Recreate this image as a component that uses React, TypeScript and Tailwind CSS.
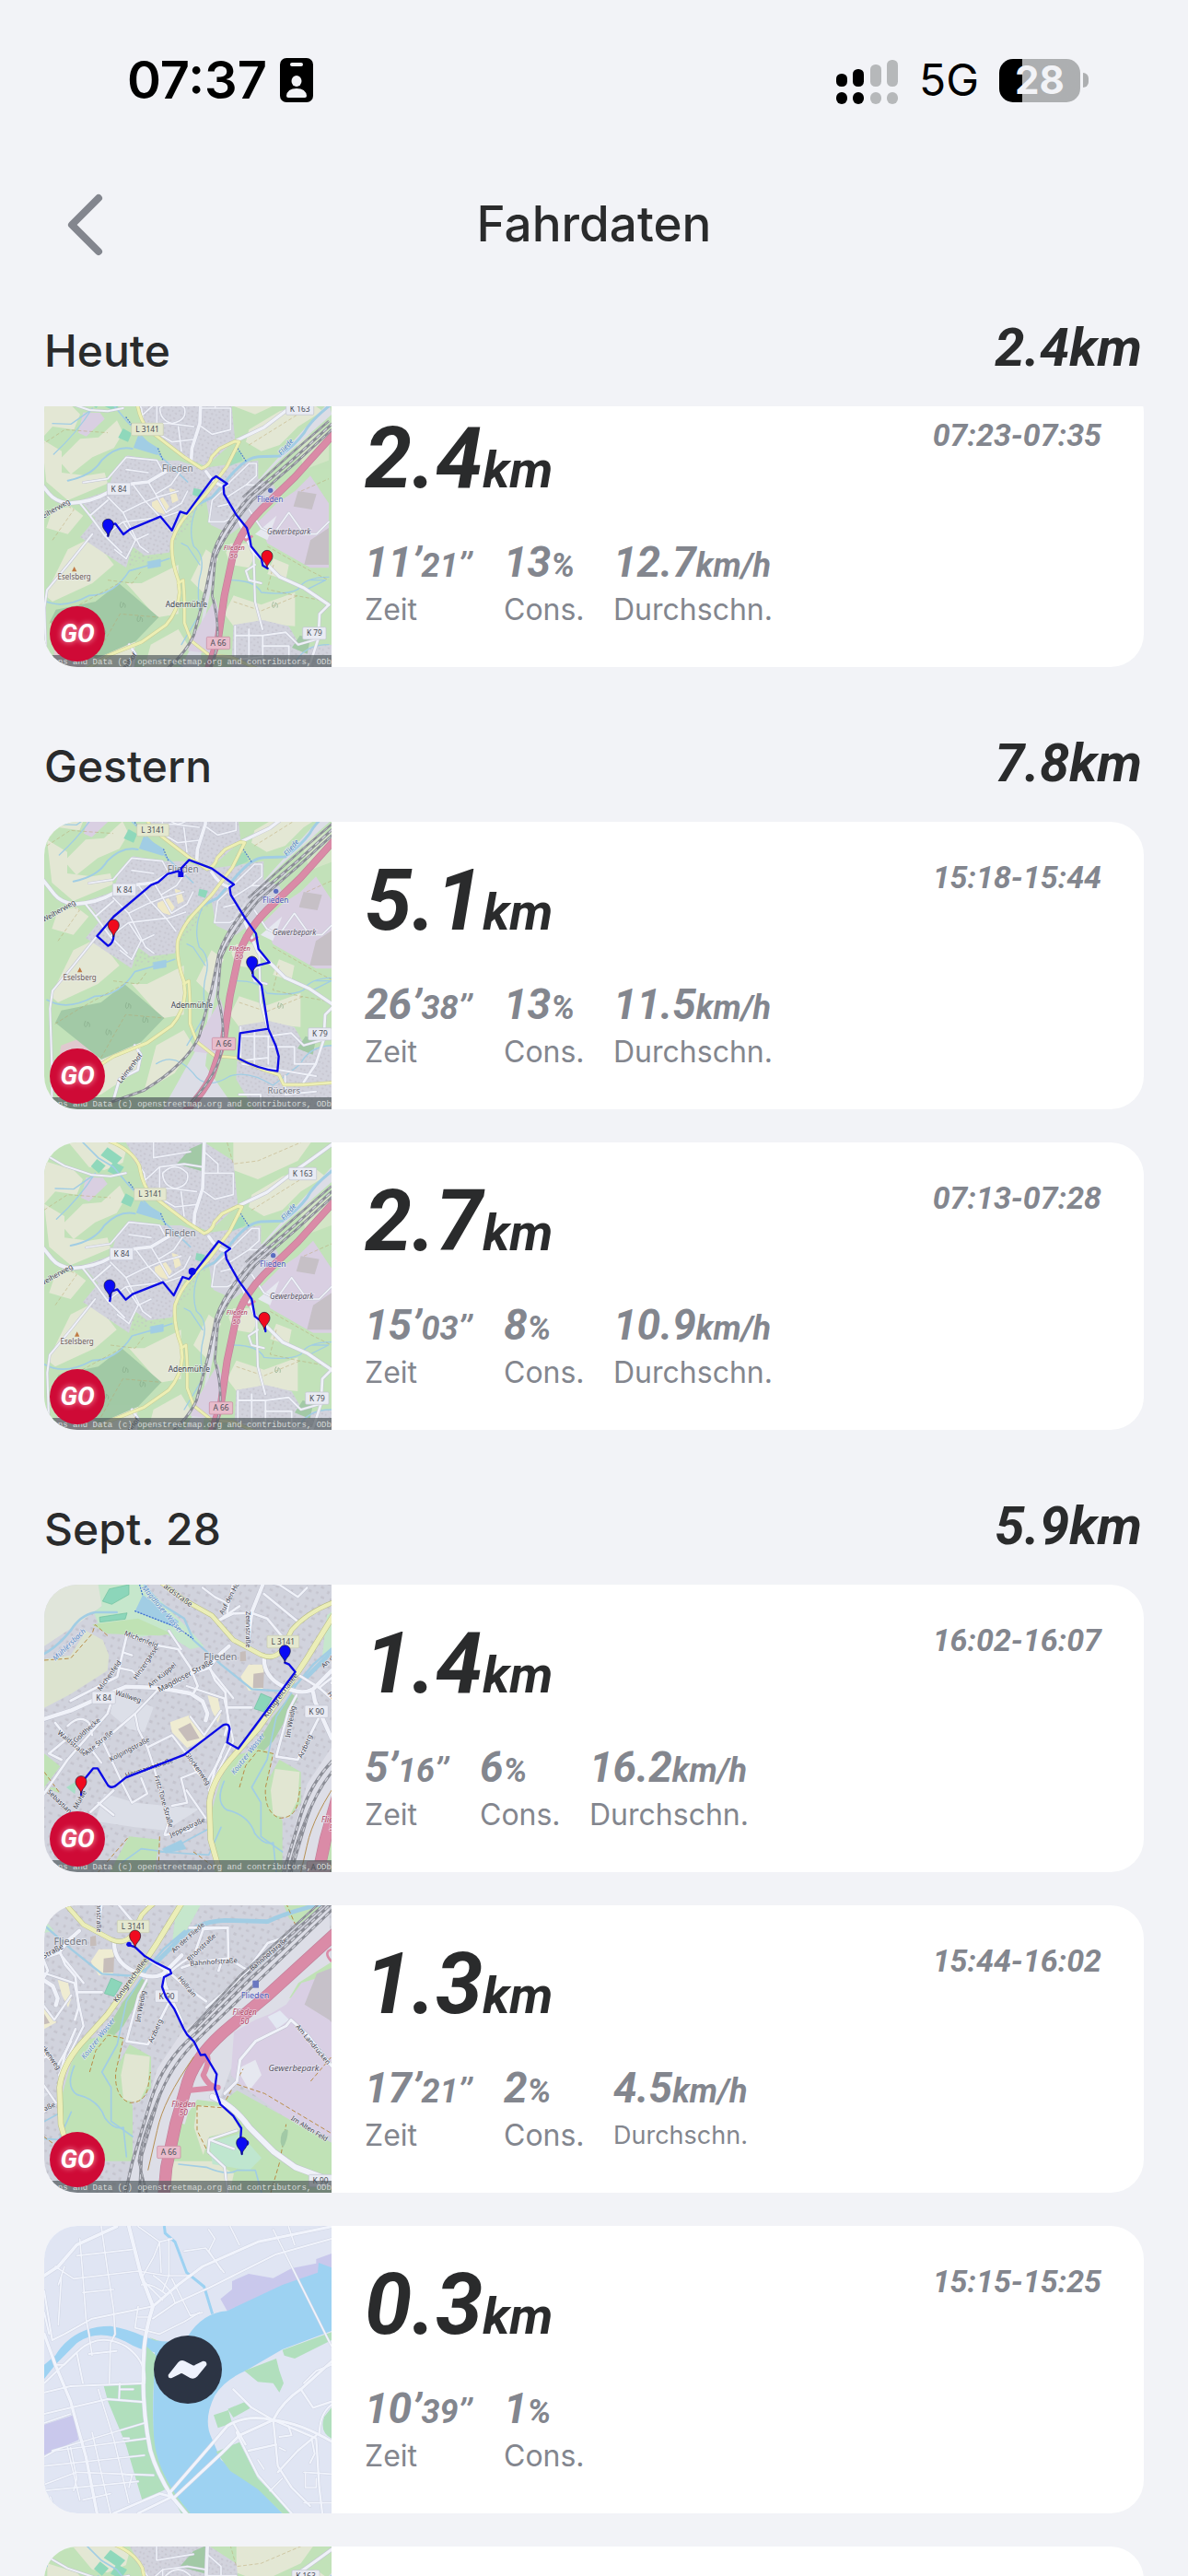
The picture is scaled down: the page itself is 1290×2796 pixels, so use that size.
import type { ReactNode } from "react";

/* ---------- map building blocks ---------- */

type RoadSet = { d: string; w: number };

function Roads({ items, color, casing }: { items: RoadSet[]; color: string; casing: string }) {
  return (
    <g fill="none" strokeLinecap="round" strokeLinejoin="round">
      {items.map((r, i) => (
        <path key={"c" + i} d={r.d} stroke={casing} strokeWidth={r.w + 3} />
      ))}
      {items.map((r, i) => (
        <path key={"f" + i} d={r.d} stroke={color} strokeWidth={r.w} />
      ))}
    </g>
  );
}

function Rail({ d, w = 9 }: { d: string; w?: number }) {
  return (
    <g fill="none">
      <path d={d} stroke="#8b8d96" strokeWidth={w} />
      <path d={d} stroke="#cfd0d8" strokeWidth={w - 5} strokeDasharray="16 14" />
    </g>
  );
}

function Tag({ x, y, w, text, kind = "k" }: { x: number; y: number; w: number; text: string; kind?: "k" | "l" | "a" }) {
  const fill = kind === "l" ? "#e4e8cf" : kind === "a" ? "#e8bccb" : "#e9ebf3";
  const stroke = kind === "l" ? "#c9cdb0" : kind === "a" ? "#c9879f" : "#c3c6d2";
  return (
    <g>
      <rect x={x - w / 2} y={y - 20} width={w} height={40} rx={4} fill={fill} stroke={stroke} strokeWidth={2} />
      <text x={x} y={y + 9} textAnchor="middle" fontSize={25} fill="#4c4f58" fontFamily="'Noto Sans', sans-serif">
        {text}
      </text>
    </g>
  );
}

function Label({
  x,
  y,
  text,
  size = 24,
  color = "#3f424b",
  rotate = 0,
  italic = false,
}: {
  x: number;
  y: number;
  text: string;
  size?: number;
  color?: string;
  rotate?: number;
  italic?: boolean;
}) {
  return (
    <text
      x={x}
      y={y + size * 0.35}
      transform={`rotate(${rotate} ${x} ${y})`}
      textAnchor="middle"
      fontSize={size}
      fill={color}
      stroke="#eef0f6"
      strokeWidth={4}
      strokeOpacity={0.7}
      paintOrder="stroke"
      fontStyle={italic ? "italic" : "normal"}
      fontFamily="'Noto Sans', sans-serif"
    >
      {text}
    </text>
  );
}

function Pin({ x, y, color }: { x: number; y: number; color: string }) {
  return (
    <path
      transform={`translate(${x} ${y})`}
      d="M0 0C-2-16-18-22-18-39a18 18 0 1 1 36 0C18-22 2-16 0 0Z"
      fill={color}
      stroke="#1a1a2e"
      strokeWidth={2}
      strokeLinejoin="round"
    />
  );
}

function Route({ d }: { d: string }) {
  return <path d={d} fill="none" stroke="#0a0ae6" strokeWidth={7} strokeLinejoin="round" strokeLinecap="round" />;
}

function Buildings({ id, size }: { id: string; size: number }) {
  return (
    <pattern id={id} width={size * 5} height={size * 5} patternUnits="userSpaceOnUse" patternTransform="rotate(24)">
      <g fill="#bfbdc7" opacity={0.7}>
        <rect x={size * 0.3} y={size * 0.4} width={size * 0.7} height={size * 0.5} />
        <rect x={size * 1.7} y={size * 0.2} width={size * 0.5} height={size * 0.7} />
        <rect x={size * 3.3} y={size * 0.7} width={size * 0.8} height={size * 0.5} />
        <rect x={size * 0.8} y={size * 2.1} width={size * 0.5} height={size * 0.6} />
        <rect x={size * 2.4} y={size * 1.9} width={size * 0.7} height={size * 0.5} />
        <rect x={size * 4.1} y={size * 2.3} width={size * 0.5} height={size * 0.7} />
        <rect x={size * 0.2} y={size * 3.6} width={size * 0.7} height={size * 0.6} />
        <rect x={size * 1.9} y={size * 3.4} width={size * 0.5} height={size * 0.5} />
        <rect x={size * 3.2} y={size * 3.9} width={size * 0.8} height={size * 0.5} />
      </g>
    </pattern>
  );
}

/* ---------- village overview ---------- */

const overviewStreets: RoadSet[] = [
  { d: "M10 360L48 408Q70 435 112 440Q190 436 240 405L320 376L372 370L430 336", w: 11 },
  { d: "M546 20L540 180L514 262L512 300", w: 11 },
  { d: "M970 30Q880 96 850 116L750 192L662 234", w: 10 },
  { d: "M10 60L90 106L180 136L240 140L290 130", w: 6 },
  { d: "M560 336Q585 376 616 384L630 380", w: 10 },
  { d: "M660 480L712 596L760 640L800 680L880 716L960 770", w: 10 },
  { d: "M190 540L110 640L42 722L34 780L40 966L40 1110", w: 6 },
  { d: "M150 440L182 480L230 545L285 600M182 480L240 430", w: 6 },
  { d: "M240 420L290 470L345 580L372 600M290 470L350 440L400 420L470 400", w: 5 },
  { d: "M230 545L290 500L412 486M290 500L330 560L372 540M330 560L300 620", w: 5 },
  { d: "M160 372L240 360L300 290L400 300L416 330M300 330L372 340M320 376L360 430L412 486L444 528", w: 5 },
  { d: "M372 370L396 410L446 380L480 330M396 410L430 470L480 440L500 400", w: 5 },
  { d: "M416 486L476 466M300 620L262 590", w: 5 },
  { d: "M300 60L350 130L356 180L440 180L520 190M356 150L400 110L480 100L540 110", w: 5 },
  { d: "M380 30L380 80L440 70L500 60M400 110L400 210L450 240L520 232M470 190L480 270", w: 5 },
  { d: "M410 130Q450 90 490 130Q500 170 450 180Q410 170 410 130", w: 5 },
  { d: "M545 130L640 130L640 200L580 215L545 190M545 60L590 100L590 130", w: 5 },
  { d: "M628 380L700 310L724 310L724 350L690 380L628 420M690 380L740 380L800 340", w: 5 },
  { d: "M612 400L580 430L570 500L620 500L660 480M640 440L600 450", w: 5 },
  { d: "M700 460L740 520L780 540L830 470L880 540L920 540L960 500", w: 5 },
  { d: "M720 640L690 660L700 690L740 700M715 600L720 760L744 850", w: 6 },
  { d: "M655 840L655 950L745 940M655 870L745 870L745 960M700 850L700 960M745 870L820 860L860 900L930 880", w: 6 },
  { d: "M745 905L830 905L830 960L900 960M660 960L780 980L900 1000M800 1000L800 1060L900 1050M650 1060L720 1060L720 1110", w: 6 },
  { d: "M960 770L930 800L926 880L900 960L860 1020", w: 8 },
  { d: "M310 900L330 930L320 980L260 1010L240 1080", w: 8 },
];

const overviewYellow: RoadSet[] = [
  { d: "M236 26Q310 54 334 106Q344 170 372 200L440 252L490 290L545 326Q572 318 578 290L604 262L654 238L668 240L628 320L560 410L500 474Q466 512 450 560Q444 620 470 690L474 730Q470 790 430 836L350 892L240 936L140 1000", w: 9 },
  { d: "M470 700L486 690L490 760L490 830L512 888L570 934L640 940L730 980L780 996L795 1028L860 1028L970 1020", w: 8 },
];

function Overview() {
  return (
    <g>
      <defs>
        <Buildings id="buildings-small" size={9} />
      </defs>
      <rect x={0} y={-100} width={1000} height={1260} fill="#c2e2b9" />
      <g fill="#e3e7d4">
        <path d="M95 20H236L290 60L280 96L220 120L170 110Z" />
        <path d="M24 90L120 120L150 150L130 200L60 190L24 230Z" />
        <path d="M150 230L210 225L270 170L290 210L260 260L190 290L120 345L80 300Z" />
        <path d="M24 230L90 270L90 340L170 350L230 340L240 375L110 430L40 370Z" />
        <path d="M640 20L900 20L850 90L720 150L640 120Z" />
        <path d="M700 200L800 140L900 110L940 140L860 190L800 250L740 270L690 240Z" />
        <path d="M110 590L190 550L260 640L190 700L60 760L36 740Z" />
        <path d="M60 460L120 450L160 480L110 540L40 520Z" />
        <path d="M350 700L470 640L470 800L400 812L300 700Z" />
        <path d="M60 950L200 930L330 890L320 980L200 1060L60 1080Z" />
        <path d="M560 740L510 690L560 590L600 620L560 700Z" />
        <path d="M640 570L700 570L720 610L700 650L640 640L625 600Z" />
        <path d="M780 620L830 640L820 690L760 670Z" />
        <path d="M650 740L740 770L850 730L850 840L740 830L650 840L620 800Z" />
        <path d="M850 230L960 200V300L880 330Z" opacity={0.5} />
        <path d="M380 900L470 850L500 900L440 990L340 1050Z" />
      </g>
      <g fill="#d2d3dd">
        <path d="M290 30H546L640 90L655 235L560 320L490 290L360 190L334 106Z" />
        <path d="M304 284L400 300L470 300L545 326L730 300V360L780 380L800 420L640 540L575 510L560 430L480 480L440 600L360 610L320 580L300 650L150 550L200 490L150 430L240 400L260 330Z" />
        <path d="M970 150L800 300L680 420L640 520L600 600L560 800L540 966L640 1110H400L540 860L580 600L640 470L760 330L960 110Z" fill="#dcdde6" />
        <path d="M650 836L745 820L830 840L870 910L970 900V1110H700L640 1010Z" />
      </g>
      <g fill="url(#buildings-small)">
        <path d="M290 30H546L640 90L655 235L560 320L490 290L360 190L334 106Z" />
        <path d="M304 284L400 300L545 326L730 300V360L640 520L560 430L440 600L300 650L150 550L200 490L150 430L240 400Z" />
        <path d="M650 836L745 820L830 840L870 910L970 900V1110H700L640 1010Z" />
      </g>
      <g fill="#d9cfe2">
        <path d="M160 144L215 145L230 165L170 222L144 210Z" />
        <path d="M730 500L790 440L850 400L900 350L960 440V650L900 650L760 570Z" />
        <path d="M590 750L604 800L580 930L500 920L520 870Z" />
        <path d="M70 900L150 870L190 940L130 1010L60 960Z" fill="#e0c9cf" />
      </g>
      <path d="M860 400L920 410L905 460L845 450ZM900 560L960 520V640L880 640Z" fill="#c6c0c6" />
      <path d="M720 540L790 480L760 560Z" fill="#e6e8f0" />
      <g fill="#a2c9a6">
        <path d="M276 700L406 811L330 890L201 946L51 826L71 786L200 760Z" />
        <path d="M500 50L546 30V126L456 100Z" />
        <path d="M866 870L900 880L890 930L840 910Z" />
      </g>
      <g fill="#8fd8bb">
        <path d="M230 46L278 80L256 104L208 72Z" />
        <path d="M196 84L224 106L202 130L176 108Z" />
        <path d="M250 92L284 110L264 140L230 124Z" />
        <path d="M290 196L318 212L306 240L274 226Z" />
        <path d="M520 390L548 396L540 420L516 412Z" />
        <path d="M640 280L670 270L680 300L636 320Z" opacity={0.6} />
      </g>
      <path d="M384 436L420 420L440 450L424 476L384 462ZM440 390L460 396L470 430L450 440Z" fill="#efe9c8" />
      <g fill="none" stroke="#a1cde4" strokeLinecap="round" strokeLinejoin="round">
        <path d="M340 222L404 262L400 280L326 258Z" fill="#a1cde4" strokeWidth={4} />
        <path d="M970 116Q900 170 880 210Q850 250 800 286L730 288Q690 290 640 350L580 420L520 450" strokeWidth={9} />
        <path d="M320 262Q270 250 220 300Q190 350 110 366" strokeWidth={6} />
        <path d="M20 36L24 100M60 180L120 182L180 140M190 130Q140 210 64 280" strokeWidth={4} />
        <path d="M150 30L200 80L250 110L300 170L416 290L500 370" strokeWidth={5} />
        <path d="M24 752Q90 790 180 740Q260 740 310 660L380 640L440 620" strokeWidth={5} />
        <path d="M530 450Q500 520 520 580Q560 610 540 680Q530 720 540 800L480 900" strokeWidth={4} />
        <path d="M480 570L500 580L540 640" strokeWidth={4} />
        <path d="M640 690Q720 690 740 730Q820 740 860 720Q880 680 960 680M895 690L950 690L890 720" strokeWidth={4} />
        <path d="M380 960Q440 920 500 990Q540 1050 620 1000Q680 980 760 1030Q800 1000 850 960Q880 900 960 900" strokeWidth={4} />
        <path d="M370 630L412 622L412 645L372 652Z" fill="#a1cde4" strokeWidth={2} />
        <path d="M300 160L330 200M404 262L420 300M664 262L690 302" stroke="#4f7fd0" strokeWidth={4} strokeDasharray="2 7" />
      </g>
      <g fill="none" stroke="#b9a36c" strokeWidth={2} strokeDasharray="12 7" opacity={0.7}>
        <path d="M24 250L100 200L240 210M60 560L130 460L60 420M240 690L320 700L350 660M620 30L640 100L720 90L860 30" />
        <path d="M700 250L860 150M870 400L960 360M760 580L900 660L960 690M780 640L760 720L850 740L960 760" />
        <path d="M50 830L130 780L276 700M200 940L280 800L406 811M650 760L740 790L860 740" />
      </g>
      <Roads items={overviewStreets} color="#eff1f8" casing="#c3c5d2" />
      <Roads items={overviewYellow} color="#edefb4" casing="#c8cb93" />
      <path
        d="M980 210L850 354L740 460Q680 520 650 600L620 740L600 880L560 1000Q530 1060 470 1120"
        fill="none"
        stroke="#c2809a"
        strokeWidth={24}
      />
      <path
        d="M980 210L850 354L740 460Q680 520 650 600L620 740L600 880L560 1000Q530 1060 470 1120"
        fill="none"
        stroke="#da8ba7"
        strokeWidth={20}
      />
      <path d="M664 540L690 560L712 546" fill="none" stroke="#da8ba7" strokeWidth={8} />
      <Rail d="M976 176L840 300L700 420Q610 520 584 600L560 720L520 870Q480 960 341 1046L230 1086" />
      <Rail d="M970 200L850 310L712 430Q620 540 590 620L580 740Q610 850 590 930Q570 1010 480 1100" w={8} />
      <Rail d="M960 172L840 276L680 420" w={7} />
      <Tag x={866} y={132} w={90} text="K 163" />
      <Tag x={369} y={199} w={104} text="L 3141" kind="l" />
      <Tag x={276} y={393} w={76} text="K 84" />
      <Tag x={913} y={863} w={76} text="K 79" />
      <Tag x={600} y={895} w={76} text="A 66" kind="a" />
      <Label x={467} y={326} text="Flieden" size={30} color="#74777f" />
      <Label x={769} y={427} text="Flieden" size={25} color="#4a56b8" />
      <circle cx={770} cy={398} r={8} fill="#5a6cc0" />
      <Label x={820} y={256} text="Fliede" size={24} color="#4f83c4" rotate={-50} italic />
      <Label x={830} y={532} text="Gewerbepark" size={24} color="#5b5566" italic />
      <Label x={652} y={584} text="Flieden" size={22} color="#b03a5b" italic />
      <Label x={650} y={612} text="50" size={22} color="#b03a5b" italic />
      <Label x={131} y={680} text="Eselsberg" size={24} color="#6c5a52" />
      <path d="M131 646L139 662H123Z" fill="#c07a45" />
      <Label x={496} y={769} text="Adenmühle" size={25} />
      <Label x={62} y={462} text="Weiherweg" size={23} rotate={-30} />
      <Label x={796} y={1046} text="Rückers" size={29} color="#74777f" />
      <Label x={294} y={974} text="Leimenhof" size={23} rotate={-52} />
      <g fill="none" stroke="#87ab8a" strokeWidth={2}>
        <path d="M284 760q-8 14 0 20q8-4 6-16q10 4 6 16M340 806q-8 14 0 20q8-4 6-16q10 4 6 16M150 820q-8 14 0 20q8-4 6-16q10 4 6 16M220 846q-8 14 0 20q8-4 6-16q10 4 6 16M780 760q-8 14 0 20q8-4 6-16q10 4 6 16" />
      </g>
    </g>
  );
}

/* ---------- village close-up ---------- */

const closeStreets: RoadSet[] = [
  { d: "M10 472L110 440L200 400L290 362L400 366L500 384L540 410L556 450L550 472", w: 13 },
  { d: "M740 20L700 120L690 200M626 230L590 262L560 300L500 320L420 372", w: 12 },
  { d: "M700 122L640 124L586 150M700 122L750 140L800 200M740 60L850 150M586 150L660 100", w: 8 },
  { d: "M740 270Q740 330 800 360Q860 392 900 370L960 310M900 380L906 410L960 530", w: 13 },
  { d: "M562 296L580 340L614 380L624 480L612 520M624 430L700 430M614 550L580 630L562 710", w: 8 },
  { d: "M294 190L280 250L262 330L110 408M294 190L360 222L460 240L500 300L524 360L510 384", w: 8 },
  { d: "M380 240L330 330M280 250L310 260M262 300L310 310L330 330M430 180L470 240", w: 7 },
  { d: "M240 420L230 450L100 600L10 730M60 480L100 530L160 580M100 530L40 580L80 600", w: 8 },
  { d: "M400 366L320 450L180 570L210 610M320 450L330 500L360 560L380 620L430 800L416 845", w: 7 },
  { d: "M100 490Q140 450 170 480L180 520M210 530L280 680L310 740L360 710L340 660M360 560L440 520L490 585", w: 7 },
  { d: "M490 585L520 640L470 660L490 740L440 750M520 640L555 670L600 590M500 460L545 520L600 440", w: 7 },
  { d: "M530 800L500 830L420 845M175 770L250 700M200 740L250 780", w: 8 },
  { d: "M740 20L790 30L850 70L880 40M540 40L580 70L620 90M640 20L620 120", w: 7 },
  { d: "M846 320L920 366L970 410L1040 460M846 390L820 440L780 590L850 600L900 500L920 460", w: 8 },
  { d: "M920 366Q960 330 1000 310L1030 225L1110 220L1112 320L1020 330L960 350M1112 320L1160 350L1180 360L1040 480", w: 8 },
  { d: "M1180 350L1240 270L1300 250M1090 330L1080 360M985 220L1110 220", w: 8 },
  { d: "M1100 760L1140 720L1150 650L1200 590L1300 540L1316 520L1370 570L1448 670", w: 9 },
  { d: "M1060 770Q1130 800 1180 870L1260 950L1330 1000L1448 1044", w: 18 },
  { d: "M1140 880L1050 910L1046 950L1100 1000L1110 1090M1050 910L1130 940", w: 7 },
  { d: "M488 360L610 400L640 540L560 700M488 700L550 790M560 300L640 400", w: 7 },
];

const closeYellow: RoadSet[] = [
  { d: "M404 22L480 80L570 130L640 210L730 258Q770 276 796 246L830 178Q880 120 970 86", w: 13 },
  { d: "M970 124Q910 220 880 270L820 360L720 500L630 600Q570 670 562 740L566 860L600 980", w: 16 },
];

function CloseUp() {
  return (
    <g>
      <defs>
        <Buildings id="buildings-large" size={15} />
      </defs>
      <rect x={0} y={0} width={1480} height={1110} fill="#d1d3dd" />
      <rect x={0} y={0} width={1480} height={1110} fill="url(#buildings-large)" />
      <g fill="#e0e5da">
        <path d="M0 0H200L212 100L130 160L24 230L0 230Z" />
        <path d="M0 276L110 260L160 180L215 210L235 260L230 310L110 386L0 444Z" fill="#dce3cf" />
      </g>
      <g fill="#c6e7cc">
        <path d="M200 30H350L500 180L545 230L500 240L420 190L330 200L210 180L185 120L212 100Z" />
        <path d="M945 130L1010 80L1030 130L970 240L930 260Z" />
      </g>
      <path d="M180 160L330 140L440 190L400 196L230 190Z" fill="#bfe2b4" />
      <path d="M250 370L380 430L350 510L300 500L240 450ZM220 710L320 740L420 750L530 760L420 830L320 820L190 800Z" fill="#dcdfe8" />
      <g fill="#8cd6ba" stroke="#6cc09f" strokeWidth={2}>
        <path d="M236 44L300 30V62L244 94L214 84Z" />
        <path d="M204 136L294 122L288 142L206 152Z" />
        <path d="M730 384L766 400L740 444L708 434Z" />
      </g>
      <path d="M434 478L500 454L552 528L490 562L440 510ZM556 390L590 400L600 450L590 480L570 440ZM690 290L740 290L736 370L690 376L664 330Z" fill="#efecd2" />
      <path d="M460 500L500 480L530 530L490 540ZM706 320L740 316L738 366L704 366ZM662 250L680 246L682 278L662 280Z" fill="#c6bdba" />
      <g fill="#c0e2b6">
        <path d="M640 590L730 560L770 580L750 690L800 800L800 980H580L566 780L600 660Z" />
        <path d="M24 580L76 622L24 690ZM24 690L76 710L60 690ZM230 980L300 850L400 860L380 980Z" />
        <path d="M790 600L860 640L860 740L820 790L770 780L740 690Z" />
      </g>
      <path d="M830 385L850 400L770 540L740 570L710 560L770 460Z" fill="#a9d3a8" />
      <path d="M776 630L856 640L850 730L820 790L770 780L762 700Z" fill="#e1e6d2" />
      <path d="M96 690L130 670L124 712Z" fill="#a8dfc6" />
      {/* right half: railway, works area, meadows */}
      <path d="M1020 150L1040 130L1290 140L1310 190L1340 210L1448 130V30H1180L1060 100Z" fill="#c2e2b8" />
      <path d="M1440 150L1130 430L960 560L880 680L830 860L760 1110H1000L1040 900L1120 680L1448 420Z" fill="#dddee7" />
      <path d="M1310 450L1340 400L1450 330V420L1350 440Z" fill="#c0e2b6" />
      <path d="M1130 560L1200 520L1250 500L1300 470L1350 400L1448 370V900L1340 870L1150 730L1120 700Z" fill="#d9cfe4" />
      <path d="M1140 680L1200 650L1220 700L1180 750Z" fill="#e6e8f0" />
      <path d="M1360 470L1400 370L1450 350V530L1440 520Z" fill="#c6c1c9" />
      <path d="M1240 510L1280 490L1310 520L1270 550Z" fill="#e3e8f2" />
      <path d="M1140 750L1448 920V1110H910L930 900L1010 780L1090 790Z" fill="#c0e2b6" />
      <path d="M1010 800L1110 800L1150 880L1050 900L1030 960L1000 870Z" fill="#e1e6d2" />
      <path d="M920 980L1060 980L1130 1020L1110 1110H920Z" fill="#e1e6d2" />
      <path d="M1050 920L1150 890L1220 970L1180 1010L1060 990Z" fill="#bfe6cf" />
      <path d="M930 800L990 790L970 860L930 850Z" fill="#dedfe8" />
      <g fill="none" stroke="#a1cde4" strokeLinecap="round" strokeLinejoin="round">
        <path d="M322 116L346 66L460 150L452 168Z" fill="#a1cde4" strokeWidth={4} />
        <path d="M10 262Q60 240 110 180Q140 130 190 120L260 120" strokeWidth={8} />
        <path d="M350 30L400 90L480 140L510 210L600 290L700 370L810 378L850 350L900 290L970 230" strokeWidth={7} />
        <path d="M1448 134Q1300 170 1240 200L1100 196Q1000 200 940 270L880 330" strokeWidth={14} />
        <path d="M850 350L780 460L750 600L700 690L730 740L730 850L800 900" strokeWidth={5} />
        <path d="M610 670Q580 740 620 764Q690 780 710 840Q740 880 770 870L780 966" strokeWidth={5} />
        <path d="M570 820L420 900L340 890L270 940M400 900L560 910L600 820" strokeWidth={5} />
        <path d="M410 890L470 862L486 890L420 904Z" fill="#a1cde4" strokeWidth={2} />
        <path d="M950 990L1040 1000Q1110 1030 1140 1010L1200 1010L1220 1083" strokeWidth={5} />
        <path d="M335 30L345 66M320 116L460 170L508 206M1000 80L1024 140" stroke="#3f6fd0" strokeWidth={4} strokeDasharray="3 7" />
      </g>
      <g fill="none" stroke="#b98b45" strokeWidth={3} strokeDasharray="14 8">
        <path d="M24 276L110 270L180 190L190 160L235 200" />
        <path d="M660 690L680 620L720 570L770 580L745 690Q740 770 790 790Q840 790 850 740L858 690" />
        <path d="M200 966L300 850M400 850L396 966M510 900L600 966M24 640L76 710M1300 140L1330 210M1140 730L1230 760L1448 890" />
        <path d="M1010 800L1090 806L1160 680M1010 800L1010 880L1050 960M1250 1083L1280 980L1300 860M1380 720L1448 640" />
      </g>
      <Roads items={closeStreets} color="#f0f2f9" casing="#bfc1ce" />
      <Roads items={closeYellow} color="#ebeeb8" casing="#b9bd85" />
      <g fill="none" strokeLinejoin="round">
        <path d="M1470 230L1240 440L1120 540Q1010 630 980 720L940 860L910 1000L900 1110" stroke="#c2809a" strokeWidth={40} />
        <path d="M1470 230L1240 440L1120 540Q1010 630 980 720L940 860L910 1000L900 1110" stroke="#da8ba7" strokeWidth={36} />
        <path d="M1030 620Q1060 640 1030 700Q1050 740 1078 740L980 750" stroke="#da8ba7" strokeWidth={18} />
        <path d="M1448 330Q1420 300 1448 290" stroke="#da8ba7" strokeWidth={8} />
      </g>
      <Rail d="M1460 130L1180 390L1010 560Q900 650 860 780L800 980L770 1110" w={10} />
      <Rail d="M1460 152L1200 402L1020 576Q920 670 880 790L830 960L820 1110" w={9} />
      <Rail d="M1440 130L1160 384L1000 550" w={9} />
      <Rail d="M1420 130L1150 376L980 560" w={7} />
      <Rail d="M890 760Q830 900 820 980L850 1100" w={7} />
      <path d="M1000 640Q900 780 880 880L850 1010" fill="none" stroke="#b58f52" strokeWidth={3} />
      <Tag x={218} y={398} w={76} text="K 84" />
      <Tag x={802} y={216} w={104} text="L 3141" kind="l" />
      <Tag x={911} y={443} w={76} text="K 90" />
      <Tag x={918} y={951} w={76} text="A 66" kind="a" />
      <Tag x={1412} y={1044} w={76} text="K 90" />
      <Label x={598} y={264} text="Flieden" size={32} color="#74777f" />
      <Label x={460} y={64} text="ardstraße" size={24} rotate={36} />
      <Label x={410} y={110} text="Magdloser Wasser" size={24} color="#5a8cc6" rotate={50} italic />
      <Label x={105} y={225} text="Mühlersbach" size={24} color="#5a8cc6" rotate={-44} italic />
      <Label x={340} y={208} text="Michenfeld" size={22} rotate={22} />
      <Label x={236} y={326} text="Michenfeld" size={22} rotate={-54} />
      <Label x={354} y={284} text="Hinzergasse" size={22} rotate={-56} />
      <Label x={408} y={324} text="Am Küppel" size={22} rotate={-40} />
      <Label x={484} y={326} text="Magdloser Straße" size={24} rotate={-28} />
      <Label x={690} y={176} text="Zennstraße" size={22} rotate={90} />
      <Label x={630} y={68} text="Auf den Höh" size={22} rotate={-62} />
      <Label x={298} y={394} text="Wallweg" size={22} rotate={18} />
      <Label x={162} y={504} text="Goldhecke" size={22} rotate={-42} />
      <Label x={116} y={546} text="Waldstraße" size={22} rotate={40} />
      <Label x={202} y={544} text="Alte Straße" size={22} rotate={-40} />
      <Label x={302} y={566} text="Kolpingstraße" size={22} rotate={-28} />
      <Label x={524} y={628} text="Glockenweg" size={22} rotate={54} />
      <Label x={414} y={736} text="Fritz-Töne-Straße" size={22} rotate={74} />
      <Label x={490} y={820} text="Jeppestraße" size={22} rotate={-24} />
      <Label x={74} y={736} text="Sebastian" size={22} rotate={44} />
      <Label x={140} y={730} text="Mühle" size={22} rotate={-60} />
      <Label x={366} y={626} text="Hermannstraße" size={22} rotate={-18} />
      <Label x={688} y={580} text="Koutzer Wasser" size={24} color="#5a8cc6" rotate={-52} italic />
      <Label x={793} y={390} text="Königreichallee" size={24} rotate={-54} />
      <Label x={826} y={476} text="Im Weidig" size={22} rotate={-80} />
      <Label x={874} y={556} text="Arzberg" size={22} rotate={-66} />
      <Label x={980} y={252} text="An der Fliede" size={22} rotate={-42} />
      <Label x={1024} y={284} text="Rhönstraße" size={22} rotate={-44} />
      <Label x={1064} y={331} text="Bahnhofstraße" size={22} rotate={-4} />
      <Label x={1243} y={306} text="Bahnhofstraße" size={22} rotate={-40} />
      <Label x={978} y={412} text="Höllrain" size={22} rotate={50} />
      <Label x={1199} y={440} text="Flieden" size={27} color="#4a56b8" />
      <rect x={1191} y={392} width={20} height={24} fill="#6a78c0" />
      <Label x={1165} y={496} text="Flieden" size={25} color="#b03a5b" italic />
      <Label x={1165} y={525} text="50" size={25} color="#b03a5b" italic />
      <Label x={966} y={794} text="Flieden" size={25} color="#b03a5b" italic />
      <Label x={966} y={823} text="50" size={25} color="#b03a5b" italic />
      <Label x={1325} y={677} text="Gewerbepark" size={28} color="#5b5566" italic />
      <Label x={1388} y={600} text="Am Landrücken" size={22} rotate={50} />
      <Label x={1376} y={874} text="Im Alten Feld" size={22} rotate={32} />
      <path d="M1286 890Q1300 870 1306 880Q1306 910 1290 936Q1276 920 1286 890Z" fill="#a2c9a6" />
    </g>
  );
}

/* ---------- placeholder city map ---------- */

const cityStreets: RoadSet[] = [
  { d: "M24 210L70 180L130 110L260 50", w: 11 },
  { d: "M300 50L340 210L378 310Q350 400 348 470Q340 640 370 780Q390 850 440 930L490 990", w: 12 },
  { d: "M378 310L460 240L540 180L720 100L960 50", w: 9 },
  { d: "M378 350L450 300L560 250L640 210L780 140L960 90", w: 6 },
  { d: "M24 400L60 500L110 620L160 800L196 984", w: 10 },
  { d: "M24 260L50 420L90 400L180 350L378 310M24 330L40 400", w: 6 },
  { d: "M140 90L150 210L160 350L170 400L180 470M210 50L230 190L250 320L255 400L240 430L236 560", w: 5 },
  { d: "M60 180L120 220L330 195L420 210L500 210M130 145L310 125M150 265L250 255M80 210L70 370M90 180L70 240", w: 5 },
  { d: "M330 50L400 100L440 90M400 100L380 150L340 220L410 290M400 100L405 200M430 90L430 210L410 260", w: 5 },
  { d: "M480 130L550 120L610 200M560 60L580 90L560 130L600 190M630 50L660 110M820 50L840 110M770 60L960 440", w: 5 },
  { d: "M380 210Q440 250 450 300M440 220L480 300L500 340L540 330M340 240Q370 230 420 270", w: 5 },
  { d: "M320 380L330 310M320 380L400 400L480 360L530 330M330 345L370 345", w: 5 },
  { d: "M24 560L130 460Q200 390 290 440Q360 490 350 560", w: 6 },
  { d: "M60 500L90 500L130 460L150 560M170 465L260 455M24 590L110 570L350 560M24 660L230 612L350 622", w: 6 },
  { d: "M24 690L110 660M50 780L350 690M24 800L60 780L360 740M24 830L350 795M24 890L130 850L380 860M24 910L330 880", w: 5 },
  { d: "M100 770L140 940M180 720L240 984M110 770L130 870L120 910M200 580L250 740L300 950M44 930L60 984M150 940L240 920", w: 5 },
  { d: "M270 560L268 610M270 580L314 580M280 740L300 740M280 856L310 860L300 900", w: 5 },
  { d: "M430 920L560 770L620 700Q680 660 770 680Q860 690 960 750", w: 9 },
  { d: "M450 930L600 790L660 730L770 680M770 680Q800 620 860 580L960 490", w: 9 },
  { d: "M640 580L700 640L770 680L785 830L830 900L890 960M650 720L720 860L830 984M640 690L680 760", w: 7 },
  { d: "M770 680L910 740L920 900L930 984M785 850L850 780L910 730M690 780L780 760M860 580L900 640L960 620", w: 7 },
  { d: "M870 850L960 856M875 850V900H910V870M870 950L960 950M740 840L720 810M800 870L760 910M790 770L810 780", w: 5 },
  { d: "M920 730Q920 660 960 630M870 560L910 520L960 500M895 740L905 790L890 820M820 700L830 730L790 735", w: 6 },
  { d: "M250 984L400 920L440 930L330 984", w: 8 },
];

function CityMap() {
  return (
    <svg viewBox="24 48 936 936" className="size-full" role="img" aria-label="Stadtkarte">
      <rect x={0} y={30} width={980} height={980} fill="#e0e5f3" />
      <g fill="#c9c8ec">
        <path d="M24 695L120 664L136 745L24 794Z" />
        <path d="M598 286L636 255V228L690 204L770 218L830 186L910 170V156L960 138V220L620 325Z" />
      </g>
      <path d="M24 500L60 470Q120 374 240 374Q300 384 350 408Q430 440 490 410Q540 330 620 325L800 240L915 200L918 168L960 184V390L800 450L680 520Q610 550 580 600Q540 680 570 740L600 810L720 900L800 984H490Q400 900 380 760Q376 640 384 460Q330 450 290 425Q200 380 130 430L60 500L24 546Z" fill="#9dd2f2" />
      <path d="M415 48L418 72L450 100L488 200L545 246L572 335" fill="none" stroke="#9dd2f2" strokeWidth={9} />
      <g fill="#b1dfbd">
        <path d="M358 440L388 470Q370 640 384 760Q400 870 500 984H470L370 800Q340 640 358 440Z" />
        <path d="M216 562L352 560L350 620L358 720L370 800L430 900L344 944L290 760L232 620Z" />
        <path d="M576 664L624 648L636 690L590 706ZM622 644L680 620L698 640L640 672Z" />
        <path d="M676 520L780 480L790 520L804 560L790 590L770 560L720 556Z" />
        <path d="M800 452L960 394V420L840 480L806 470Z" />
        <path d="M584 784L660 752L720 870L830 984H800L720 905L630 846Z" />
        <path d="M960 640V740Q920 720 936 670ZM365 410L400 424L380 420Z" />
      </g>
      <Roads items={cityStreets} color="#f1f4fc" casing="#d0d5e4" />
      <circle cx={492} cy={516} r={111} fill="#2c3444" />
      <path
        d="M428 533L460 493Q469 482 482 488L508 502Q512 504 516 500L541 488Q555 488 553 501L523 538Q513 549 499 543L474 529Q470 527 466 530L440 543Q427 546 428 533Z"
        fill="#eef2fd"
      />
    </svg>
  );
}

/* ---------- trip maps ---------- */

function TripMap({ top, label, children }: { top: number; label: string; children: ReactNode }) {
  return (
    <svg viewBox={`24 ${top} 936 936`} className="size-full" role="img" aria-label={label}>
      {children}
      <rect x={24} y={top + 897} width={936} height={39} fill="#4a5358" fillOpacity={0.66} />
      <text x={36} y={top + 926} fontSize={27} fill="#d6dad8" fontFamily="'Liberation Mono', monospace">
        Maps and Data (c) openstreetmap.org and contributors, ODb
      </text>
    </svg>
  );
}

const tripMaps: Record<string, ReactNode> = {
  heute: (
    <TripMap top={-53} label="Route 07:23 bis 07:35">
      <g transform="translate(-9 -90)">
        <Overview />
      </g>
      <Route d="M232 456L240 420L256 416L282 451L304 434L403 393L440 438L467 377L488 384L572 270L584 262L620 286L608 294L610 320L650 388L684 430L694 466L698 490L732 532L736 552L752 562" />
      <Pin x={232} y={458} color="#0a0af5" />
      <Pin x={750} y={560} color="#f00a1e" />
    </TripMap>
  ),
  gestern1: (
    <TripMap top={36} label="Route 15:18 bis 15:44">
      <g transform="translate(9 -136)">
        <Overview />
      </g>
      <Route d="M250 400Q252 430 232 440L196 408L250 345L372 242L396 232L426 206L462 196L474 212L470 188L496 160L570 188L642 240L628 250L632 274L680 352L714 400L722 450L758 494L702 508L704 538L732 568L754 710L662 724L656 806Q720 840 784 848L788 800L778 764L754 710" />
      <rect x={460} y={200} width={18} height={16} fill="#0a0ae6" />
      <Pin x={250} y={411} color="#f00a1e" />
      <Pin x={701} y={531} color="#0a0af5" />
    </TripMap>
  ),
  gestern2: (
    <TripMap top={30} label="Route 07:13 bis 07:28">
      <Overview />
      <Route d="M238 546L242 516L262 508L290 542L312 524L411 485L446 528L475 468L496 475L592 352L630 376L614 388L618 410L656 478L700 540L710 596L742 622L745 645" />
      <circle cx={506} cy={450} r={12} fill="#0a0ae6" />
      <Pin x={237} y={534} color="#0a0af5" />
      <Pin x={741} y={640} color="#f00a1e" />
    </TripMap>
  ),
  sept1: (
    <TripMap top={30} label="Route 16:02 bis 16:07">
      <CloseUp />
      <Route d="M144 714L148 672L184 628L198 628L232 684Q246 696 260 682L290 658L480 584L606 488Q626 478 628 500L620 544L656 564L842 314L822 290L808 284" />
      <Pin x={144} y={710} color="#f00a1e" />
      <Pin x={808} y={284} color="#0a0af5" />
    </TripMap>
  ),
  sept2: (
    <TripMap top={24} label="Route 15:44 bis 16:02">
      <g transform="translate(-488 -123)">
        <CloseUp />
      </g>
      <Route d="M296 152L320 160L352 190L390 212L434 234L438 246L414 258L408 290L420 322L448 362L478 426L490 446L512 468L534 512L548 510L586 574L580 620L598 672L640 710L666 750L664 780L668 834" />
      <circle cx={300} cy={151} r={8} fill="#0a0ae6" />
      <circle cx={682} cy={798} r={9} fill="#0a0ae6" />
      <Pin x={320} y={162} color="#f00a1e" />
      <Pin x={668} y={836} color="#0a0af5" />
    </TripMap>
  ),
  sept3: <CityMap />,
  sept4: (
    <TripMap top={30} label="Route">
      <g transform="translate(10 -5)">
        <Overview />
      </g>
    </TripMap>
  ),
};

/* ---------- data ---------- */

type Trip = {
  id: string;
  km: string;
  range: string;
  min?: string;
  sec?: string;
  cons?: string;
  speed?: string;
  smallSpeedLabel?: boolean;
  go: boolean;
};

const days: { title: string; total: string; trips: Trip[] }[] = [
  {
    title: "Heute",
    total: "2.4km",
    trips: [{ id: "heute", km: "2.4", range: "07:23-07:35", min: "11", sec: "21", cons: "13", speed: "12.7", go: true }],
  },
  {
    title: "Gestern",
    total: "7.8km",
    trips: [
      { id: "gestern1", km: "5.1", range: "15:18-15:44", min: "26", sec: "38", cons: "13", speed: "11.5", go: true },
      { id: "gestern2", km: "2.7", range: "07:13-07:28", min: "15", sec: "03", cons: "8", speed: "10.9", go: true },
    ],
  },
  {
    title: "Sept. 28",
    total: "5.9km",
    trips: [
      { id: "sept1", km: "1.4", range: "16:02-16:07", min: "5", sec: "16", cons: "6", speed: "16.2", go: true },
      { id: "sept2", km: "1.3", range: "15:44-16:02", min: "17", sec: "21", cons: "2", speed: "4.5", smallSpeedLabel: true, go: true },
      { id: "sept3", km: "0.3", range: "15:15-15:25", min: "10", sec: "39", cons: "1", go: false },
      { id: "sept4", km: "", range: "", go: false },
    ],
  },
];

/* ---------- page ---------- */

function StatusBar() {
  return (
    <div className="flex h-[174px] shrink-0 items-center justify-between pr-[108px] pl-[138px] text-black">
      <div className="flex items-center gap-[14px]">
        <span className="text-[56px] leading-none font-semibold">07:37</span>
        <svg viewBox="0 0 36 48" className="h-12 w-9" aria-hidden="true">
          <rect width={36} height={48} rx={7} fill="#000" />
          <rect x={11} y={5} width={14} height={4} rx={2} fill="#f2f3f7" />
          <ellipse cx={18} cy={25} rx={5.5} ry={6} fill="#f2f3f7" />
          <path d="M7 41Q8 33 18 33T29 41Q29 43 27 43H9Q7 43 7 41Z" fill="#f2f3f7" />
        </svg>
      </div>
      <div className="flex items-center">
        <svg viewBox="0 0 68 48" className="mt-1 h-12 w-[68px]" aria-hidden="true">
          <g fill="#000">
            <rect x={0} y={15} width={12} height={14} rx={5.5} />
            <rect x={18} y={10} width={12} height={19} rx={5.5} />
            <rect x={0} y={35} width={12} height={13} rx={6} />
            <rect x={18} y={35} width={12} height={13} rx={6} />
          </g>
          <g fill="#b6b8ba">
            <rect x={37} y={5} width={12} height={24} rx={5.5} />
            <rect x={55} y={0} width={12} height={29} rx={5.5} />
            <rect x={37} y={35} width={12} height={13} rx={6} />
            <rect x={55} y={35} width={12} height={13} rx={6} />
          </g>
        </svg>
        <span className="ml-[22px] text-[48px] leading-none">5G</span>
        <div className="ml-[22px] flex items-center gap-[3px]">
          <div className="flex h-[47px] w-[88px] items-center justify-center rounded-[15px] bg-linear-to-r from-black from-[28%] to-[#adafb1] to-[28%] text-[42px] leading-none font-bold text-[#f2f3f7]">
            28
          </div>
          <div className="h-4 w-[6px] rounded-r-full bg-[#adafb1]" />
        </div>
      </div>
    </div>
  );
}

function Stat({ value, unit, label, small = false }: { value: string; unit: string; label: string; small?: boolean }) {
  return (
    <div>
      <dd className="font-['Roboto',sans-serif] text-[46px] leading-[56px] font-bold italic">
        {value}
        <span className="text-[36px]">{unit}</span>
      </dd>
      <dt className={small ? "text-[27px] leading-[40px]" : "text-[32px] leading-[40px]"}>{label}</dt>
    </div>
  );
}

function TripCard({ trip }: { trip: Trip }) {
  return (
    <article className="flex h-[312px] shrink-0 overflow-hidden rounded-[36px] bg-white">
      <div className="relative size-[312px] shrink-0">
        {tripMaps[trip.id]}
        {trip.go && (
          <span className="absolute bottom-[6px] left-[6px] flex size-[60px] items-center justify-center rounded-full bg-[#cf0a36] font-['Roboto',sans-serif] text-[28px] font-bold text-white italic [text-shadow:0_0_6px_rgba(255,190,205,0.9)]">
            GO
          </span>
        )}
      </div>
      {trip.km && (
        <div className="flex flex-1 items-start justify-between pr-[46px] pl-9">
          <div className="pt-[38px]">
            <p className="font-['Roboto',sans-serif] text-[92px] leading-[96px] font-bold text-[#2a2b2c] italic">
              {trip.km}
              <span className="text-[56px]">km</span>
            </p>
            <dl className="mt-6 flex flex-row text-[#83868e]">
              <div className={trip.min && trip.min.length > 1 ? "w-[151px]" : "w-[125px]"}>
                <Stat value={`${trip.min}’`} unit={`${trip.sec}’’`} label="Zeit" />
              </div>
              <div className="w-[119px]">
                <Stat value={trip.cons ?? ""} unit="%" label="Cons." />
              </div>
              {trip.speed && <Stat value={trip.speed} unit="km/h" label="Durchschn." small={trip.smallSpeedLabel} />}
            </dl>
          </div>
          <time className="mt-10 font-['Roboto',sans-serif] text-[34px] leading-[40px] font-bold text-[#83868e] italic">
            {trip.range}
          </time>
        </div>
      )}
    </article>
  );
}

export default function App() {
  return (
    <main className="flex h-screen w-full flex-col overflow-hidden bg-[#f2f3f7] font-['Inter',sans-serif] text-[#2a2b2c]">
      <StatusBar />
      <header className="grid h-[139px] shrink-0 grid-cols-[1fr_auto_1fr] items-center px-[68px]">
        <button type="button" aria-label="Zurück" className="w-12">
          <svg viewBox="0 0 48 72" className="h-[72px] w-12" fill="none" aria-hidden="true">
            <path d="M39 7L10 36L39 65" stroke="#83868e" strokeWidth={8} strokeLinecap="round" strokeLinejoin="round" />
          </svg>
        </button>
        <h1 className="text-[53px] leading-none font-medium">Fahrdaten</h1>
      </header>
      <div className="flex min-h-0 flex-1 flex-col gap-10 px-12">
        {days.map((day, i) => (
          <section key={day.title} className="shrink-0">
            <div className="flex h-32 items-end justify-between pr-[2px] pb-[30px]">
              <h2 className="text-[48px] leading-[60px] font-medium">{day.title}</h2>
              <p className="font-['Roboto',sans-serif] text-[58px] leading-[68px] font-bold italic">{day.total}</p>
            </div>
            <div className="overflow-hidden">
              <div className={i === 0 ? "-mt-[29px] flex flex-col gap-9" : "flex flex-col gap-9"}>
                {day.trips.map((trip) => (
                  <TripCard key={trip.id} trip={trip} />
                ))}
              </div>
            </div>
          </section>
        ))}
      </div>
    </main>
  );
}
